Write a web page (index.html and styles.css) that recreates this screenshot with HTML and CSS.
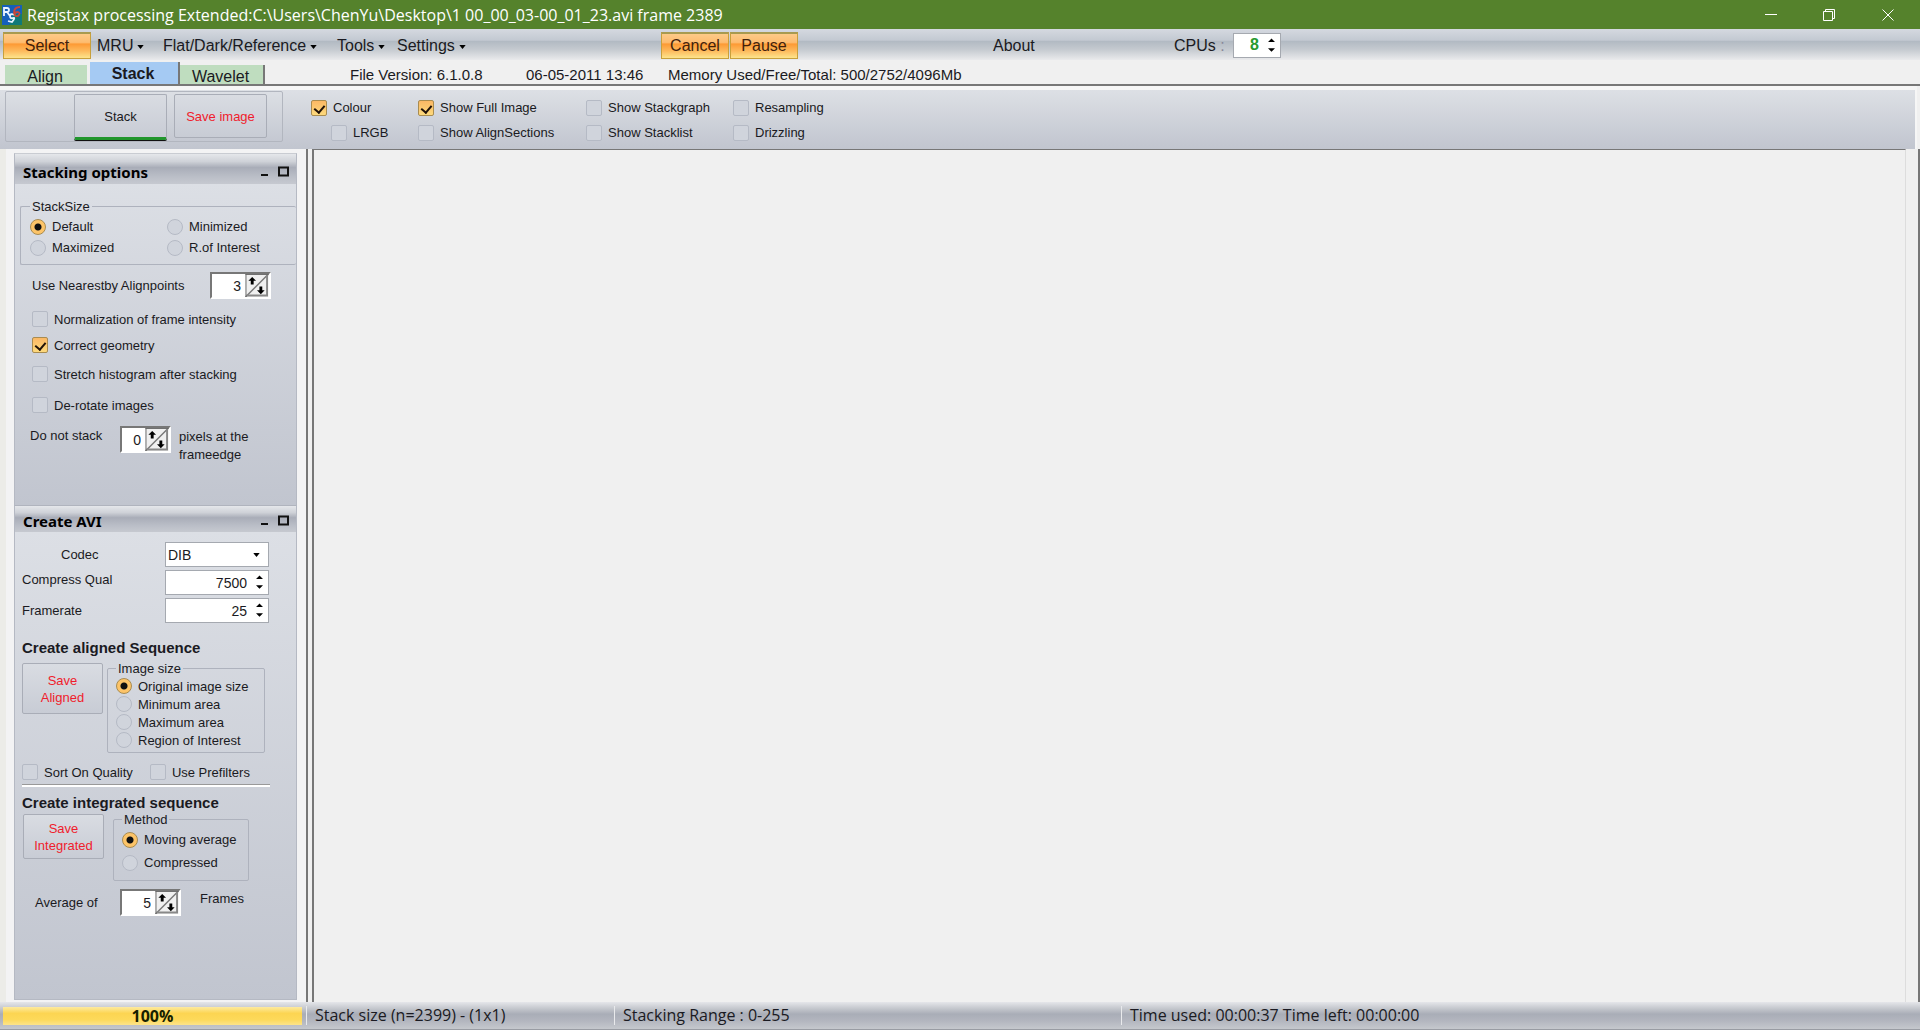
FILE: index.html
```html
<!DOCTYPE html>
<html lang="en">
<head>
<meta charset="utf-8">
<title>Registax</title>
<link rel="stylesheet" href="styles.css">
</head>
<body>
<svg class="defs" aria-hidden="true">
  <symbol id="caret" viewBox="0 0 8 5"><path d="M0 0h8L4 5z"/></symbol>
  <symbol id="updown" viewBox="0 0 8 16"><path d="M4 0l4 4H0zM0 11h8L4 15z"/></symbol>
  <symbol id="diag" viewBox="0 0 24 24">
    <path d="M0 0h24v24H0z" fill="#f0f0f0"/>
    <path d="M0 24L24 0" stroke="#777" stroke-width="1.5"/>
    <path d="M22.5 1v21.500H1" fill="none" stroke="#888" stroke-width="2"/>
    <path d="M7 3l4 4H8.500v4h-3V7H3zM16 21l-4-4h2.500v-4h3v4H20z"/>
    <path d="M.5 0v24M0 .5h24" stroke="#666"/>
  </symbol>
</svg>
<div class="window">
  <header class="titlebar">
    <svg class="app-icon" viewBox="0 0 20 20" aria-hidden="true">
      <path d="M0 0h20v20H0z" fill="#1560b8"/><path d="M11 9h9v11H7z" fill="#0e7a78"/>
      <path d="M2 11V3h3q2 0 2 2t-2 2H2m3 0l3 4M13 10q-5-2-5 1t3 2-1 4l-4-1" fill="none" stroke="#e8f4ff" stroke-width="1.800"/>
      <path d="M18 2q-6 0-6 6 1 4 4 3 3-3 0-4-3 0-4 2" fill="none" stroke="#c8483a" stroke-width="1.800"/>
    </svg>
    <h1 class="title">Registax processing Extended:C:\Users\ChenYu\Desktop\1 00_00_03-00_01_23.avi frame 2389</h1>
    <div class="win-buttons">
      <button aria-label="Minimize"><svg viewBox="0 0 12 12"><path d="M0 5.500h12"/></svg></button>
      <button aria-label="Restore"><svg viewBox="0 0 12 12"><path d="M.5 2.500h9v9h-9zM2.500 2.500v-2h9v9h-2"/></svg></button>
      <button aria-label="Close"><svg viewBox="0 0 12 12"><path d="M.5.5l11 11M11.500.5l-11 11"/></svg></button>
    </div>
  </header>

  <nav class="menubar">
    <button class="hot select">Select</button>
    <button class="menu mru">MRU<svg class="caret"><use href="#caret"/></svg></button>
    <button class="menu reference">Flat/Dark/Reference<svg class="caret"><use href="#caret"/></svg></button>
    <button class="menu tools">Tools<svg class="caret"><use href="#caret"/></svg></button>
    <button class="menu settings">Settings<svg class="caret"><use href="#caret"/></svg></button>
    <button class="hot">Cancel</button>
    <button class="hot">Pause</button>
    <button class="menu about">About</button>
    <label class="cpus" for="cpus">CPUs <span class="faint">:</span></label>
    <span class="spin cpu-spin"><input id="cpus" type="text" value="8"><svg class="updown"><use href="#updown"/></svg></span>
  </nav>

  <div class="tabs">
    <button class="tab">Align</button>
    <button class="tab active">Stack</button>
    <button class="tab wavelet">Wavelet</button>
    <span class="info version">File Version: 6.1.0.8</span>
    <span class="info date">06-05-2011 13:46</span>
    <span class="info">Memory Used/Free/Total: 500/2752/4096Mb</span>
  </div>

  <div class="toolbar">
    <div class="actions">
      <button class="btn stack-btn">Stack</button>
      <button class="btn red image-btn">Save image</button>
    </div>
    <div class="options">
      <label><input type="checkbox" checked>Colour</label>
      <label><input type="checkbox" checked>Show Full Image</label>
      <label><input type="checkbox">Show Stackgraph</label>
      <label><input type="checkbox">Resampling</label>
      <label class="sub"><input type="checkbox">LRGB</label>
      <label><input type="checkbox">Show AlignSections</label>
      <label><input type="checkbox">Show Stacklist</label>
      <label><input type="checkbox">Drizzling</label>
    </div>
  </div>

  <div class="main">
    <aside class="sidebar">
      <section class="panel">
        <header class="panel-head"><h2>Stacking options</h2>
          <button aria-label="Collapse panel"><svg viewBox="0 0 11 11"><path d="M2 9h7" /></svg></button>
          <button aria-label="Maximize panel"><svg viewBox="0 0 11 11"><path d="M1 1.500h9v8H1z"/></svg></button>
        </header>
        <div class="panel-body stacking">
          <fieldset class="group size-group"><legend>StackSize</legend>
            <label><input type="radio" name="size" checked>Default</label>
            <label><input type="radio" name="size">Minimized</label>
            <label><input type="radio" name="size">Maximized</label>
            <label><input type="radio" name="size">R.of Interest</label>
          </fieldset>
          <div class="row nearest"><label for="near">Use Nearestby Alignpoints</label>
            <span class="sunken wide"><input id="near" type="text" value="3"><svg><use href="#diag"/></svg></span></div>
          <div class="checks">
            <label><input type="checkbox">Normalization of frame intensity</label>
            <label><input type="checkbox" checked>Correct geometry</label>
            <label><input type="checkbox">Stretch histogram after stacking</label>
            <label><input type="checkbox">De-rotate images</label>
          </div>
          <div class="row edge"><label for="edge">Do not stack</label>
            <span class="sunken"><input id="edge" type="text" value="0"><svg><use href="#diag"/></svg></span>
            <span class="edge-text">pixels at the<br>frameedge</span></div>
        </div>
      </section>

      <section class="panel grow">
        <header class="panel-head"><h2>Create AVI</h2>
          <button aria-label="Collapse panel"><svg viewBox="0 0 11 11"><path d="M2 9h7" /></svg></button>
          <button aria-label="Maximize panel"><svg viewBox="0 0 11 11"><path d="M1 1.500h9v8H1z"/></svg></button>
        </header>
        <div class="panel-body avi">
          <div class="fields">
            <label class="codec" for="codec">Codec</label>
            <span class="spin combo"><select id="codec"><option>DIB</option></select><svg class="caret"><use href="#caret"/></svg></span>
            <label for="qual">Compress Qual</label>
            <span class="spin"><input id="qual" type="text" value="7500"><svg class="updown"><use href="#updown"/></svg></span>
            <label for="rate">Framerate</label>
            <span class="spin"><input id="rate" type="text" value="25"><svg class="updown"><use href="#updown"/></svg></span>
          </div>
          <h3>Create aligned Sequence</h3>
          <div class="row top">
            <button class="btn red aligned">Save<br>Aligned</button>
            <fieldset class="group image-group"><legend>Image size</legend>
              <label><input type="radio" name="img" checked>Original image size</label>
              <label><input type="radio" name="img">Minimum area</label>
              <label><input type="radio" name="img">Maximum area</label>
              <label><input type="radio" name="img">Region of Interest</label>
            </fieldset>
          </div>
          <div class="row pair">
            <label><input type="checkbox">Sort On Quality</label>
            <label><input type="checkbox">Use Prefilters</label>
          </div>
          <hr>
          <h3>Create integrated sequence</h3>
          <div class="row top integrated-row">
            <button class="btn red integrated">Save<br>Integrated</button>
            <fieldset class="group method-group"><legend>Method</legend>
              <label><input type="radio" name="method" checked>Moving average</label>
              <label><input type="radio" name="method">Compressed</label>
            </fieldset>
          </div>
          <div class="row average"><label for="avg">Average of</label>
            <span class="sunken wide"><input id="avg" type="text" value="5"><svg><use href="#diag"/></svg></span>
            <span class="frames">Frames</span></div>
        </div>
      </section>
    </aside>
    <div class="sash"></div>
    <main class="canvas"></main>
  </div>

  <footer class="status">
    <div class="progress" role="progressbar" aria-valuenow="100">100%</div>
    <span class="cell size-cell">Stack size (n=2399) - (1x1)</span>
    <span class="cell range-cell">Stacking Range : 0-255</span>
    <span class="cell">Time used: 00:00:37 Time left: 00:00:00</span>
  </footer>
</div>
</body>
</html>
```
FILE: styles.css
```css
* { box-sizing: border-box; }
body { margin: 0; background: #f0f0f0; color: #1a1a22; font: 13px/17px "Liberation Sans", Arial, sans-serif; }
button, input, select { font: inherit; color: inherit; margin: 0; padding: 0; border: 0; background: none; border-radius: 0; }
h1, h2, h3, fieldset, legend { margin: 0; padding: 0; font-size: inherit; }
label, span { white-space: nowrap; }
.defs { position: absolute; width: 0; height: 0; }
.window { display: flex; flex-direction: column; min-height: 100vh; }

/* title bar */
.titlebar { display: flex; align-items: center; height: 29px; padding-left: 2px; background: #55822c; color: #fff; }
.app-icon { width: 20px; height: 20px; margin-right: 5px; }
.title { flex: 1; font: 16px/20px "Open Sans", "Noto Sans", sans-serif; white-space: nowrap; }
.win-buttons { display: flex; padding-right: 2px; }
.win-buttons button { display: grid; place-items: center; width: 58px; height: 28px; }
.win-buttons button:last-child { width: 60px; }
.win-buttons svg { width: 12px; height: 12px; fill: none; stroke: #fff; }

/* menu bar */
.menubar { display: flex; align-items: center; height: 31px; padding: 1px 0 0 3px; font-size: 16px; line-height: 20px;
  background: linear-gradient(#d5d9e0, #c3c9d2 36%, #b2bac3 40%, #c4c9cf 65%, #eaeaec); }
.hot { width: 68px; height: 27px; margin-right: 1px; border: 1px solid #c8a03c; border-top: 2px solid #a89a50; color: #41210c;
  background: linear-gradient(#fdca88, #fdbc70 35%, #fd9a35 42%, #fdb95c 70%, #fde48c); }
.hot.select { width: 88px; margin-right: 6px; }
.menu { display: flex; align-items: center; gap: 4px; height: 27px; padding-top: 2px; }
.menu .caret { margin-top: 1px; }
.mru { width: 66px; }
.reference { width: 174px; }
.tools { width: 60px; }
.settings { width: 264px; }
.about { width: 181px; margin-left: 194px; }
.caret { width: 7px; height: 4px; }
.updown { width: 7px; height: 15px; }
.cpus { width: 59px; padding-top: 2px; }
.faint { color: #889; }
.spin { display: flex; align-items: center; width: 104px; height: 25px; padding-right: 5px; background: #fff; border: 1px solid #a5a9b0; }
.spin input, .spin select { flex: 1; width: 0; height: 22px; text-align: right; padding-right: 9px; font-size: 14px; line-height: 20px; }
.cpu-spin { width: 48px; }
.cpu-spin input { color: #289a30; font-size: 16px; font-weight: bold; }
.combo input, .combo select { text-align: left; padding-left: 2px; appearance: none; }
.combo .caret { margin-right: 3px; }

/* tabs */
.tabs { display: flex; align-items: flex-end; height: 26px; padding-left: 5px; border-bottom: 2px solid #777; background: #f0f0f0; }
.tab { width: 82px; height: 19px; margin-right: 3px; background: #bfddbf; font-size: 16px; line-height: 19px; padding: 2px 2px 0 0; }
.tab.active { width: 90px; height: 22px; margin-right: 0; padding-top: 0; background: #a5caf3; border-right: 2px solid #777; font-weight: bold; }
.tab.wavelet { width: 85px; border-right: 2px solid #777; }
.info { font-size: 15px; line-height: 19px; }
.version { width: 176px; margin-left: 82px; }
.date { width: 142px; }

/* toolbar */
.toolbar { display: flex; height: 63px; margin-right: 3px; padding: 6px 0 7px 5px; border: solid #f6f6f6; border-width: 4px 2px 0 0;
  background: linear-gradient(#dde0e5, #c1c5cf); }
.actions { display: flex; gap: 7px; width: 278px; height: 51px; margin-top: -5px; padding: 2px 14px 0 68px; border: 1px solid #b2b6bf; border-radius: 2px; }
.btn { border: 1px solid #a9adb7; border-radius: 2px; background: linear-gradient(#d9dce2, #c8ccd5); line-height: 17px; text-align: center; }
.stack-btn { width: 93px; height: 46px; border-bottom: 3px solid #21962d; box-shadow: 0 1px #111; }
.image-btn { width: 93px; height: 44px; }
.red { color: #f01c2c; }
.options { display: grid; grid-template-columns: 107px 168px 147px auto; grid-auto-rows: 25px; margin: -1px 0 0 28px; }
.options label, .checks label, .group label, .pair label { display: flex; align-items: center; gap: 6px; }
.options .sub { padding-left: 20px; }
input[type=checkbox], input[type=radio] { appearance: none; flex: none; width: 16px; height: 16px; border: 1px solid #b5bac5; border-radius: 2px; background: #d0d4dc; }
input[type=radio] { border-radius: 50%; }
input[type=checkbox]:checked { border-color: #a98c50; background: linear-gradient(#fbb865, #fdd97c); }
input[type=checkbox]:checked::before { content: ""; display: block; width: 5px; height: 8px; margin: 2px 0 0 4px; border: solid #201208; border-width: 0 2px 2px 0; transform: rotate(40deg); }
input[type=radio]:checked { border-color: #a98c50; background: radial-gradient(#111 0 3px, #fdc468 4px); }

/* body */
.main { display: flex; flex: 1; border-right: 2px solid #777; }
.sidebar { display: flex; flex-direction: column; width: 306px; padding: 4px 9px 2px 8px; border-left: 6px solid #ecece8; background: #f3f3f4; }
.panel { display: flex; flex-direction: column; border: 1px solid #b5b9c3; border-top-color: #c9ccd2; }
.panel + .panel { border-top-color: #b0b4be; }
.panel-head { display: flex; align-items: center; height: 26px; padding: 3px 7px 0 8px;
  background: linear-gradient(#e5e7eb, #cfd2d8 25%, #a9adb8 45%, #babec7 75%, #c6c9d0); }
.panel:first-child .panel-head { height: 30px; padding-top: 5px; }
.panel-head h2 { flex: 1; color: #000; font: bold 15px/20px "Noto Sans", sans-serif; }
.panel-head button { display: grid; margin-left: 8px; }
.panel-head svg { width: 11px; height: 11px; fill: none; stroke: #111; stroke-width: 2; }
.panel-body { flex: 1 0 auto; background: linear-gradient(#dcdfe5, #c1c5cf); }
.grow { flex: 1; margin-top: -1px; }
.row { display: flex; align-items: center; }
.row.top { align-items: flex-start; }
.stacking { min-height: 321px; padding: 14px 0 0 5px; }
.group { min-width: 0; border: 1px solid #aeb2bd; border-radius: 2px; }
.group legend { padding: 0 2px; line-height: 17px; }
.size-group { display: grid; grid-template-columns: 137px auto; grid-auto-rows: 21px; height: 67px; padding-left: 9px; border-right: 0; }
.size-group label { height: 23px; }
.nearest { height: 27px; margin: 7px 25px 0 12px; justify-content: space-between; }
.sunken { display: flex; width: 51px; height: 27px; border: solid #fff; border-width: 2px; border-top-color: #777; border-left-color: #777; background: #fff; }
.sunken.wide { width: 61px; }
.sunken input { flex: 1; width: 0; height: 23px; padding-right: 4px; text-align: right; font-size: 14px; }
.sunken svg { width: 24px; height: 23px; }
.checks { display: grid; grid-template-rows: 26px 26px 32px 30px; margin: 7px 0 0 12px; }
.edge { align-items: flex-start; margin: 6px 0 0 10px; }
.edge label { width: 90px; padding-top: 1px; }
.edge-text { margin: 2px 0 0 8px; line-height: 18px; }

.avi { padding: 10px 0 0 7px; }
.fields { display: grid; grid-template-columns: 143px 104px; grid-template-rows: 25px 25px 25px; row-gap: 3px; }
.fields label { line-height: 20px; align-self: start; }
.fields .codec { padding: 3px 0 0 39px; }
.fields label[for=rate] { padding-top: 3px; }
h3 { font-size: 15px; line-height: 17px; }
.avi h3:first-of-type { margin-top: 16px; }
.aligned { width: 81px; height: 51px; margin: 7px 4px 0 0; }
.image-group { width: 158px; height: 93px; margin-top: 4px; padding-left: 8px; }
.image-group label { height: 18px; }
.pair { gap: 17px; margin-top: 9px; height: 20px; }
hr { width: 248px; height: 3px; margin: 2px 0 0; border: 0; border-top: 1px solid #999; background: #fff; }
.avi hr + h3 { margin-top: 7px; }
.integrated { width: 81px; height: 45px; margin: 3px 9px 0 1px; }
.method-group { width: 136px; height: 70px; padding-left: 8px; }
.method-group label { height: 23px; }
.average { margin: 8px 0 0 13px; }
.average label { width: 85px; }
.frames { margin: 0 0 8px 19px; }

.sash { width: 8px; border: solid #777; border-width: 0 2px; background: #f0f0f0; }
.canvas { flex: 1; margin-right: 12px; border: solid #777; border-width: 1px 1px 0 0; border-right-color: #ddd; background: #f0f0f0; }

/* status bar */
.status { display: flex; align-items: center; height: 28px; padding: 0 0 0 3px; border-bottom: 1px solid #999ca3; font: 16px/19px "Open Sans", "Noto Sans", sans-serif;
  background: linear-gradient(#e5e6ea, #c3c6cc 25%, #a9adb7 45%, #b3b6bf 70%, #c5c8cd); }
.progress { width: 299px; height: 18px; margin-right: 4px; color: #152000; font-weight: bold; line-height: 18px; text-align: center; background: linear-gradient(#fdeaa0, #fcd552 35%, #fdd95a 70%, #fde48a); }
.cell { padding-left: 8px; border-left: 1px solid #e9eaec; }
.size-cell { width: 308px; }
.range-cell { width: 507px; }
```
